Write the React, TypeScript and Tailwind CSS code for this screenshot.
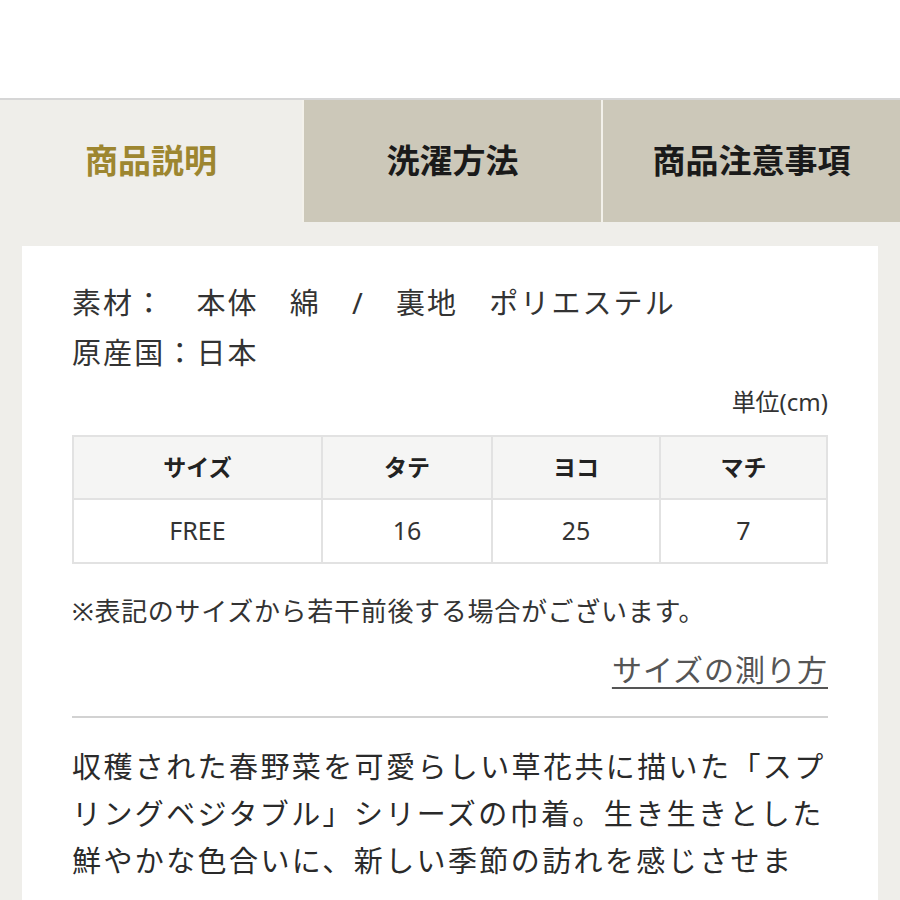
const sizes = [{ size: "FREE", tate: "16", yoko: "25", machi: "7" }];

export default function App() {
  return (
    <div className="w-[900px] h-[900px] overflow-hidden bg-white font-['Noto_Sans','Noto_Sans_CJK_JP',sans-serif] text-[#333]">
      <div className="h-[98px] bg-white" />
      <div className="h-[2px] bg-[#d6d6d6]" />
      <div className="h-full bg-[#efeeea]">
        {/* tabs */}
        <div className="flex h-[122px] gap-[2px] bg-[#f3f1ea]">
          <div className="flex w-[302px] items-center justify-center bg-[#efeeea] text-[33px] font-bold text-[#9d8630]">
            商品説明
          </div>
          <div className="flex w-[297px] items-center justify-center bg-[#ccc8b9] text-[33px] font-bold text-[#1a1a1a]">
            洗濯方法
          </div>
          <div className="flex flex-1 items-center justify-center bg-[#ccc8b9] text-[33px] font-bold text-[#1a1a1a]">
            商品注意事項
          </div>
        </div>

        {/* content card */}
        <div className="mx-[22px] mt-[24px] bg-white px-[50px] pt-[32px] pb-10">
          <div className="text-[29px] leading-[50px] tracking-[2.1px] whitespace-nowrap">
            <p>素材：　本体　綿　/　裏地　ポリエステル</p>
            <p>原産国：日本</p>
          </div>

          <p className="mt-[6px] text-right text-[24px] leading-[36px]">単位(cm)</p>

          <table className="mt-[15px] w-full table-fixed border-collapse text-center">
            <colgroup>
              <col className="w-[249px]" />
              <col className="w-[170px]" />
              <col className="w-[168px]" />
              <col />
            </colgroup>
            <thead>
              <tr className="h-[63px] bg-[#f5f5f4] text-[23px] font-bold text-[#222]">
                <th className="border-2 border-[#e2e2e2]">サイズ</th>
                <th className="border-2 border-[#e2e2e2]">タテ</th>
                <th className="border-2 border-[#e2e2e2]">ヨコ</th>
                <th className="border-2 border-[#e2e2e2]">マチ</th>
              </tr>
            </thead>
            <tbody>
              {sizes.map((r) => (
                <tr key={r.size} className="h-[64px] text-[25px]">
                  <td className="border-2 border-[#e2e2e2]">{r.size}</td>
                  <td className="border-2 border-[#e2e2e2]">{r.tate}</td>
                  <td className="border-2 border-[#e2e2e2]">{r.yoko}</td>
                  <td className="border-2 border-[#e2e2e2]">{r.machi}</td>
                </tr>
              ))}
            </tbody>
          </table>

          <p className="mt-[27px] text-[26px] leading-[40px] tracking-[0.7px] whitespace-nowrap">
            ※表記のサイズから若干前後する場合がございます。
          </p>

          <div className="mt-[17px] text-right">
            <a className="text-[30px] leading-[44px] tracking-[1px] text-[#555] underline decoration-2 underline-offset-[6px]">
              サイズの測り方
            </a>
          </div>

          <div className="mt-[24px] h-[2px] bg-[#d2d2d2]" />

          <div className="mt-[25px] text-[29px] leading-[47px] tracking-[2.4px] text-[#2a2a2a] whitespace-nowrap">
            <p>収穫された春野菜を可愛らしい草花共に描いた「スプ</p>
            <p>リングベジタブル」シリーズの巾着。生き生きとした</p>
            <p>鮮やかな色合いに、新しい季節の訪れを感じさせま</p>
          </div>
        </div>
      </div>
    </div>
  );
}
